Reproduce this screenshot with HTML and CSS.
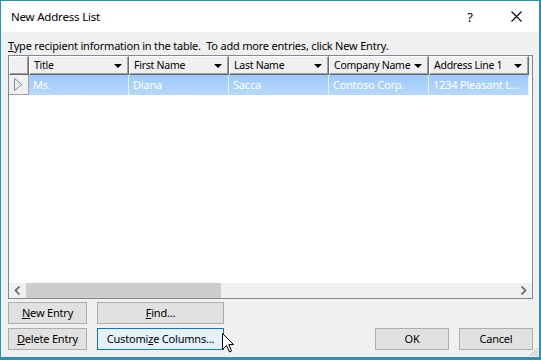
FILE: index.html
```html
<!DOCTYPE html>
<html lang="en">
<head>
  <meta charset="UTF-8">
  <meta name="viewport" content="width=device-width, initial-scale=1.0">
  <title>New Address List</title>
  <link rel="stylesheet" href="styles.css">
</head>
<body>
  <div class="window">
    <div class="titlebar">
      <span class="title">New Address List</span>
      <span class="help">?</span>
      <span class="close">
        <svg width="11" height="11" viewBox="0 0 11 11"><path d="M0.5 0.5 L10.5 10.5 M10.5 0.5 L0.5 10.5" stroke="#000" stroke-width="1.1" fill="none"/></svg>
      </span>
    </div>

    <div class="content">
      <p class="hint"><u>T</u>ype recipient information in the table.&nbsp; To add more entries, click New Entry.</p>

      <div class="grid">
        <div class="grid-head">
          <div class="corner"></div>
          <div class="hcell">Title<i class="drop"></i></div>
          <div class="hcell">First Name<i class="drop"></i></div>
          <div class="hcell">Last Name<i class="drop"></i></div>
          <div class="hcell">Company Name<i class="drop"></i></div>
          <div class="hcell">Address Line 1<i class="drop"></i></div>
        </div>
        <div class="grid-row selected">
          <div class="rowhead">
            <svg width="9" height="13" viewBox="0 0 9 13"><path d="M0.5 0.5 L8 6.5 L0.5 12.5 Z" fill="none" stroke="#7f8ea8"/></svg>
          </div>
          <div class="cell">Ms.</div>
          <div class="cell">Diana</div>
          <div class="cell">Sacca</div>
          <div class="cell">Contoso Corp.</div>
          <div class="cell">1234 Pleasant L...</div>
        </div>
        <div class="grid-fill"></div>
        <div class="hscroll">
          <span class="arrow">
            <svg width="7" height="9" viewBox="0 0 7 9"><path d="M5.5 0.5 L1.5 4.5 L5.5 8.5" fill="none" stroke="#606060" stroke-width="1.6"/></svg>
          </span>
          <div class="track"><div class="thumb"></div></div>
          <span class="arrow">
            <svg width="7" height="9" viewBox="0 0 7 9"><path d="M1.5 0.5 L5.5 4.5 L1.5 8.5" fill="none" stroke="#606060" stroke-width="1.6"/></svg>
          </span>
        </div>
      </div>

      <div class="buttons">
        <button class="btn new"><u>N</u>ew Entry</button>
        <button class="btn find"><u>F</u>ind...</button>
        <button class="btn delete"><u>D</u>elete Entry</button>
        <button class="btn custom focused">Customi<u>z</u>e Columns...</button>
        <button class="btn ok">OK</button>
        <button class="btn cancel">Cancel</button>
      </div>
    </div>

    <svg class="grip" width="10" height="10" viewBox="0 0 10 10">
      <path d="M9 1 L1 9 M9 4 L4 9 M9 7 L7 9" stroke="#b8b8b8" stroke-width="1"/>
    </svg>
    <svg class="cursor" width="13" height="20" viewBox="0 0 13 20">
      <path d="M0.5 0.5 V16.5 L4.5 12.5 L7.5 19 L9.5 18 L6.8 11.5 H11.5 Z" fill="#fff" stroke="#000" stroke-width="1" stroke-linejoin="miter"/>
    </svg>
  </div>
</body>
</html>
```

FILE: styles.css
```css
* {
  box-sizing: border-box;
}
body {
  margin: 0;
  font-family: "Noto Sans", "Open Sans", sans-serif;
  font-size: 11px;
  letter-spacing: -0.2px;
  color: #000;
}
.window {
  position: relative;
  width: 541px;
  height: 360px;
  border: 1px solid #2b90b1;
  border-right-width: 2px;
  border-bottom-width: 3px;
  background: #f0f0f0;
  display: flex;
  flex-direction: column;
}
.titlebar {
  height: 31px;
  background: #fff;
  display: flex;
  align-items: center;
  padding-left: 10px;
}
.title {
  flex: 1;
  font-size: 11.5px;
  padding-bottom: 1px;
}
.help {
  width: 46px;
  text-align: center;
  font-size: 13px;
}
.close {
  width: 46px;
  display: flex;
  justify-content: center;
}
.content {
  flex: 1;
  padding: 6px 6px 0 7px;
  display: flex;
  flex-direction: column;
}
.hint {
  margin: 0;
  height: 17px;
  line-height: 16px;
}
.grid {
  height: 244px;
  border: 1px solid #828790;
  background: #fff;
  display: flex;
  flex-direction: column;
}
.grid-head {
  display: flex;
  height: 19px;
  background: #f0f0f0;
}
.corner, .hcell {
  border-top: 1px solid #fff;
  border-left: 1px solid #fff;
  border-right: 1px solid #696969;
  border-bottom: 1px solid #696969;
  box-shadow: inset -1px -1px 0 #a0a0a0;
}
.corner {
  width: 20px;
}
.hcell {
  position: relative;
  width: 100px;
  padding-left: 4px;
  font-size: 10.5px;
  line-height: 16px;
  letter-spacing: -0.25px;
  white-space: nowrap;
}
.drop {
  position: absolute;
  right: 6px;
  top: 7px;
  border-left: 4px solid transparent;
  border-right: 4px solid transparent;
  border-top: 4px solid #000;
}
.grid-row {
  display: flex;
  height: 20px;
}
.rowhead {
  width: 20px;
  background: #f0f0f0;
  border-right: 1px solid #a0a0a0;
  border-bottom: 1px solid #a0a0a0;
  display: flex;
  align-items: center;
  padding-left: 5px;
}
.cell {
  width: 100px;
  padding-left: 4px;
  line-height: 19px;
  white-space: nowrap;
  overflow: hidden;
}
.selected .cell {
  color: #fff;
  background: linear-gradient(#9ec9fb, #b6d8fd);
  border-right: 1px solid #e6f1fd;
}
.grid-fill {
  flex: 1;
}
.hscroll {
  height: 15px;
  display: flex;
  background: #f0f0f0;
}
.arrow {
  width: 17px;
  display: flex;
  align-items: center;
  justify-content: center;
}
.track {
  flex: 1;
}
.thumb {
  width: 195px;
  height: 100%;
  background: #cdcdcd;
}
.buttons {
  margin-top: 3px;
  display: grid;
  grid-template-columns: 79px 127px 1fr 74px 74px;
  grid-template-rows: 22px 22px;
  column-gap: 10px;
  row-gap: 4px;
}
.btn {
  font-family: inherit;
  font-size: 11px;
  letter-spacing: -0.2px;
  color: #000;
  background: #e1e1e1;
  border: 1px solid #adadad;
  padding: 0;
  line-height: 18px;
}
.btn.focused {
  background: #e5f1fb;
  border-color: #0078d7;
}
.btn.new {
  grid-column: 1;
  grid-row: 1;
}
.btn.find {
  grid-column: 2;
  grid-row: 1;
}
.btn.delete {
  grid-column: 1;
  grid-row: 2;
}
.btn.custom {
  grid-column: 2;
  grid-row: 2;
}
.btn.ok {
  grid-column: 4;
  grid-row: 2;
}
.btn.cancel {
  grid-column: 5;
  grid-row: 2;
}
.grip {
  position: absolute;
  right: 0;
  bottom: 0;
}
.cursor {
  position: absolute;
  left: 221px;
  top: 332px;
}
```
